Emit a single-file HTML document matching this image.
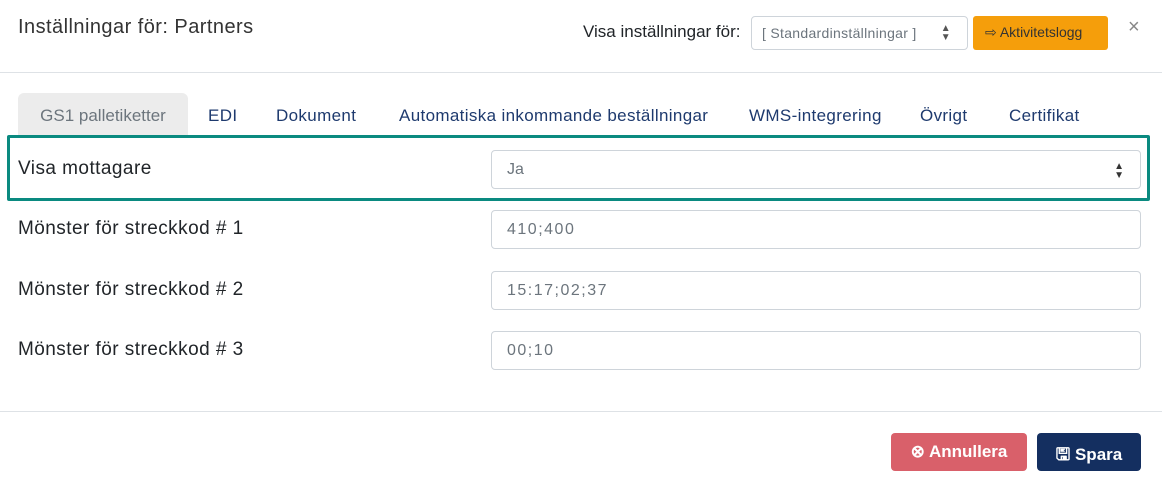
<!DOCTYPE html>
<html><head><meta charset="utf-8"><style>
*{box-sizing:border-box;margin:0;padding:0}
body{width:1162px;height:487px;background:#fff;font-family:"Liberation Sans",sans-serif;color:#212529;position:relative;overflow:hidden}
.abs{position:absolute;white-space:nowrap}
.title{left:18px;top:16px;font-size:20px;color:#333;letter-spacing:0.45px}
.hdr{left:0;top:72px;width:1162px;height:1px;background:#dee2e6}
.ftr{left:0;top:411px;width:1162px;height:1px;background:#dee2e6}
.lbl{font-size:17px;color:#212529}
.sel{left:751px;top:16px;width:217px;height:34px;border:1px solid #ced4da;border-radius:4px;font-size:14px;color:#6c757d;padding:8px 10px;letter-spacing:0.3px}
.btn-o{left:973px;top:16px;width:135px;height:34px;background:#f59e0b;border-radius:3px;font-size:14px;color:#333;padding:8px 0 0 12px}
.tab{top:93px;height:45px;font-size:17px;color:#1e3a6e;padding-top:13px;letter-spacing:0.35px}
.tab.act{background:#ececec;color:#6c757d;border-radius:6px 6px 0 0;left:18px;width:170px;text-align:center;letter-spacing:0}
.box{left:7px;top:135px;width:1143px;height:66px;border:3px solid #0a8a80;border-radius:2px}
.inp{left:491px;width:650px;height:39px;border:1px solid #ced4da;border-radius:4px;font-size:16px;color:#6c757d;padding:10px 15px}
.rl{left:18px;font-size:19px;letter-spacing:0.45px;top:0}
.b{top:433px;height:38px;border-radius:4px;color:#fff;font-size:17px;font-weight:bold;padding-top:9px;text-align:center}
</style></head><body>
<div class="abs title">Inställningar för: Partners</div>
<div class="abs lbl" style="left:583px;top:22px;font-size:17px">Visa inställningar för:</div>
<div class="abs sel">[ Standardinställningar ]<span style="position:absolute;right:16px;top:7px;font-size:10px;line-height:9px;color:#555">▲<br>▼</span></div>
<div class="abs btn-o">⇨ Aktivitetslogg</div>
<div class="abs" style="left:1128px;top:16px;font-size:20px;color:#888">×</div>
<div class="abs hdr"></div>
<div class="abs tab act">GS1 palletiketter</div>
<div class="abs tab" style="left:208px">EDI</div>
<div class="abs tab" style="left:276px">Dokument</div>
<div class="abs tab" style="left:399px">Automatiska inkommande beställningar</div>
<div class="abs tab" style="left:749px">WMS-integrering</div>
<div class="abs tab" style="left:920px">Övrigt</div>
<div class="abs tab" style="left:1009px">Certifikat</div>
<div class="abs box"></div>
<div class="abs rl" style="top:158px">Visa mottagare</div>
<div class="abs inp" style="top:150px">Ja<span style="position:absolute;right:16px;top:11px;font-size:10px;line-height:9px;color:#333">▲<br>▼</span></div>
<div class="abs rl" style="top:218px">Mönster för streckkod # 1</div>
<div class="abs inp" style="top:210px;letter-spacing:1.5px">410;400</div>
<div class="abs rl" style="top:279px">Mönster för streckkod # 2</div>
<div class="abs inp" style="top:271px;letter-spacing:1.5px">15:17;02;37</div>
<div class="abs rl" style="top:339px">Mönster för streckkod # 3</div>
<div class="abs inp" style="top:331px;letter-spacing:1.5px">00;10</div>
<div class="abs ftr"></div>
<div class="abs b" style="left:891px;width:136px;background:#d9606a">⊗ Annullera</div>
<div class="abs b" style="left:1037px;width:104px;background:#142f60">🖫 Spara</div>
</body></html>
